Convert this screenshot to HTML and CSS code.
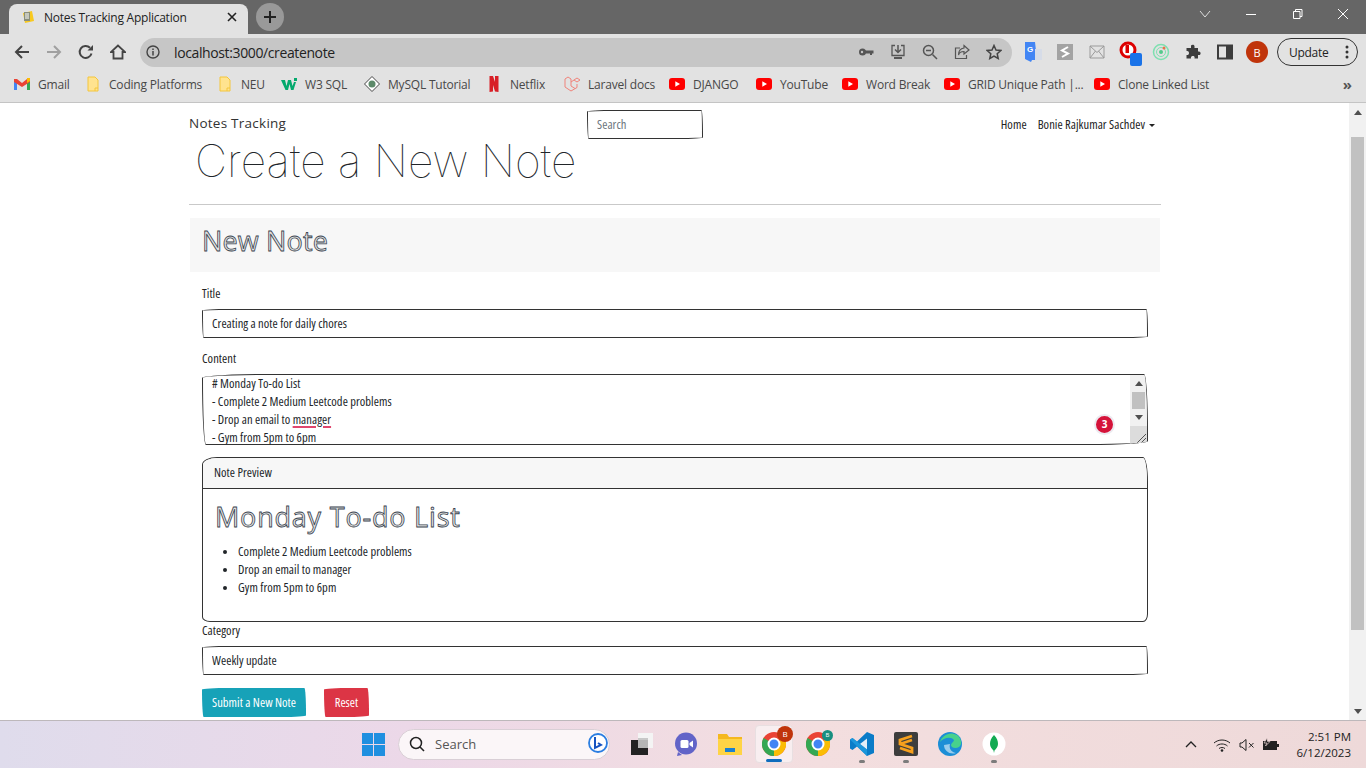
FILE: index.html
```html
<!DOCTYPE html>
<html lang="en">
<head>
<meta charset="utf-8">
<title>Notes Tracking Application</title>
<link rel="stylesheet" href="styles.css">
</head>
<body>
<svg class="defs" width="0" height="0">
  <symbol id="yt" viewBox="0 0 16 16"><rect y="2" width="16" height="12" rx="3" fill="#f00"/><path d="M6.3 5.2 11 8l-4.7 2.8z" fill="#fff"/></symbol>
  <symbol id="folder" viewBox="0 0 16 16"><path d="M3 1h7l3 3v11H3z" fill="#ffe38f" stroke="#f4c63c"/><path d="M10 15v-3h3" fill="none" stroke="#f4c63c"/></symbol>
</svg>
<header class="chrome">
  <div class="tabstrip">
    <div class="tab">
      <svg class="fav" viewBox="0 0 16 16" width="16" height="16"><path d="M3 4l9-2 2 10-9 2z" fill="#f8c91f"/><path d="M4 3h6v9H4z" fill="#8a8f7a"/><path d="M5 5h4M5 7h4M5 9h4" stroke="#fff"/></svg>
      <span class="tabtitle">Notes Tracking Application</span>
      <svg class="tabx" viewBox="0 0 10 10" width="10" height="10"><path d="M1 1l8 8M9 1l-8 8" stroke="#222" stroke-width="1.6"/></svg>
    </div>
    <div class="newtab"><svg viewBox="0 0 14 14" width="14" height="14"><path d="M7 1v12M1 7h12" stroke="#222" stroke-width="2"/></svg></div>
    <div class="winctl">
      <svg viewBox="0 0 46 12" width="46" height="12"><path d="M18 3l5 6 5-6" fill="none" stroke="#ddd"/></svg>
      <svg viewBox="0 0 46 12" width="46" height="12"><path d="M18 6.500h10" stroke="#fff"/></svg>
      <svg viewBox="0 0 46 12" width="46" height="12"><path d="M19.500 3.500h6.500v7h-6.500zM21.500 3.500v-2h6.500v7h-2" fill="none" stroke="#fff"/></svg>
      <svg viewBox="0 0 46 12" width="46" height="12"><path d="M18 1l10 10M28 1 18 11" stroke="#fff"/></svg>
    </div>
  </div>
  <div class="toolbar">
    <div class="navbtn"><svg viewBox="0 0 16 16" width="16" height="16"><path d="M15 8H2M8 2 2 8l6 6" fill="none" stroke="#444" stroke-width="2"/></svg></div>
    <div class="navbtn"><svg viewBox="0 0 16 16" width="16" height="16"><path d="M1 8h13M8 2l6 6-6 6" fill="none" stroke="#a0a0a0" stroke-width="2"/></svg></div>
    <div class="navbtn"><svg viewBox="0 0 16 16" width="16" height="16"><path d="M13.500 9.500A6 6 0 1 1 12 3.700" fill="none" stroke="#444" stroke-width="2"/><path d="M9.500 6.500H15V1z" fill="#444"/></svg></div>
    <div class="navbtn"><svg viewBox="0 0 16 16" width="16" height="16"><path d="M8 1.500 1 8h2.500v6.500h9V8H15z" fill="none" stroke="#444" stroke-width="1.800"/></svg></div>
    <div class="omnibox">
      <svg class="info" viewBox="0 0 14 14" width="14" height="14"><circle cx="7" cy="7" r="6" fill="none" stroke="#444" stroke-width="1.400"/><path d="M7 6v4.500M7 3.500v1.500" stroke="#444" stroke-width="1.500"/></svg>
      <span class="url">localhost:3000/createnote</span>
      <div class="omniicons">
        <div class="navbtn"><svg viewBox="0 0 16 16" width="16" height="16"><circle cx="4.500" cy="8" r="3.500" fill="#555"/><path d="M7 6.500h8.500v3H14v1.500h-2V9.500H7z" fill="#555"/><circle cx="4" cy="8" r="1.200" fill="#c6c6c6"/></svg></div>
        <div class="navbtn"><svg viewBox="0 0 16 16" width="16" height="16"><path d="M5 1.500H2v10h12v-10h-3" fill="none" stroke="#555" stroke-width="1.300"/><path d="M8 1v7M5 5.500 8 8.500l3-3" fill="none" stroke="#555" stroke-width="1.500"/><path d="M4 13h8v2H4z" fill="#555"/></svg></div>
        <div class="navbtn"><svg viewBox="0 0 16 16" width="16" height="16"><circle cx="6.500" cy="6.500" r="5" fill="none" stroke="#555" stroke-width="1.500"/><path d="M10.500 10.500 15 15M4 6.500h5" stroke="#555" stroke-width="1.500"/></svg></div>
        <div class="navbtn"><svg viewBox="0 0 16 16" width="16" height="16"><path d="M6 4H1.500v10.500h11V11" fill="none" stroke="#555" stroke-width="1.200"/><path d="M10 1.500 15 6l-5 4V7.500C7 7.500 5 9 4.500 11c0-4 2-6.500 5.500-7z" fill="none" stroke="#555" stroke-width="1.200"/></svg></div>
        <div class="navbtn"><svg viewBox="0 0 16 16" width="16" height="16"><path d="M8 1.500l2 4.500 4.800.5-3.600 3.200 1 4.800L8 12l-4.200 2.500 1-4.800L1.200 6.500 6 6z" fill="none" stroke="#444" stroke-width="1.500"/></svg></div>
      </div>
    </div>
    <div class="exts">
      <div class="navbtn"><svg viewBox="0 0 18 20" width="18" height="20"><path d="M1 0h10l2 18H8l-1 2-6-3z" fill="#4285f4"/><path d="M11 7h7v11h-7z" fill="#d6dce8"/><text x="3" y="10" class="gt">G</text></svg></div>
      <div class="navbtn"><svg viewBox="0 0 16 16" width="16" height="16"><path d="M0 0h16v16H0z" fill="#a3a3a3"/><path d="M11 3 5 6.500l6 3-6 3.500" fill="none" stroke="#fff" stroke-width="2"/></svg></div>
      <div class="navbtn"><svg viewBox="0 0 16 14" width="16" height="14"><path d="M1 1h14v12H1zM1 1l7 6.500L15 1M1 13l5.500-7M15 13 9.500 6" fill="none" stroke="#9a9a9a"/></svg></div>
      <div class="navbtn"><svg class="ext-block" viewBox="0 0 24 26" width="24" height="26"><circle cx="9" cy="9" r="7" fill="#fff" stroke="#d00" stroke-width="3"/><path d="M6.500 4h3.500v8H6.500z" fill="#d00"/><rect x="11" y="12" width="12" height="13" rx="2" fill="#1a73e8"/></svg></div>
      <div class="navbtn"><svg viewBox="0 0 18 18" width="18" height="18"><circle cx="9" cy="9" r="7.500" fill="none" stroke="#7ee0b0" stroke-width="1.500"/><circle cx="9" cy="9" r="4.500" fill="none" stroke="#7ee0b0"/><circle cx="9" cy="9" r="2" fill="#54c98c"/><circle cx="12" cy="5" r="1.500" fill="#e8734a"/></svg></div>
      <div class="navbtn"><svg viewBox="0 0 16 16" width="16" height="16"><path d="M6 1.500c1-1 3-1 3.500.5V4H13v3.500c2-.5 3 1 2.500 2.500s-2 1-2.500 1v3.500H9.500c.5-2-.5-2.500-1.500-2.500s-2.500.5-2 2.500H1.500V11c2 .5 2.500-1 2.500-2S3.500 6.500 1.500 7V4H6z" fill="#3c3c3c"/></svg></div>
      <div class="navbtn"><svg viewBox="0 0 16 16" width="16" height="16"><path d="M1 1.500h14v13H1z" fill="none" stroke="#3c3c3c" stroke-width="2"/><path d="M9 1.500h6v13H9z" fill="#3c3c3c"/></svg></div>
      <div class="navbtn"><span class="avatar">B</span></div>
    </div>
    <div class="update"><span>Update</span><svg viewBox="0 0 4 14" width="4" height="14"><circle cx="2" cy="2" r="1.500" fill="#333"/><circle cx="2" cy="7" r="1.500" fill="#333"/><circle cx="2" cy="12" r="1.500" fill="#333"/></svg></div>
  </div>
  <nav class="bookmarks">
    <a class="bm"><svg viewBox="0 0 16 12" width="16" height="12"><path d="M0 3v9h3V5z" fill="#4285f4"/><path d="M13 5v7h3V3z" fill="#34a853"/><path d="M0 1v3l8 5 8-5V1l-3 0-5 4-5-4z" fill="#ea4335"/><path d="M13 0h3v3l-3 2z" fill="#fbbc04"/></svg><span>Gmail</span></a>
    <a class="bm"><svg width="16" height="16"><use href="#folder"/></svg><span>Coding Platforms</span></a>
    <a class="bm"><svg width="16" height="16"><use href="#folder"/></svg><span>NEU</span></a>
    <a class="bm"><svg viewBox="0 0 16 12" width="16" height="12"><path d="M0 2h4l1.500 6L7 2h3l1.500 6L13 4h2l-2.500 8h-2.500L8.500 6 7 12H4.500z" fill="#04a96d"/><path d="M13 0h3v3h-3z" fill="#04a96d"/></svg><span>W3 SQL</span></a>
    <a class="bm"><svg viewBox="0 0 16 16" width="16" height="16"><path d="M8 .5 15.500 8 8 15.500.5 8z" fill="#fff" stroke="#444"/><circle cx="8" cy="8" r="3.500" fill="#5d8a6a"/></svg><span>MySQL Tutorial</span></a>
    <a class="bm"><svg viewBox="0 0 16 16" width="16" height="16"><path d="M3.500 0H7l2 6V0h3.500v16C11.500 15.800 10 15.600 9 15.500L7 9v6.500l-3.500.5z" fill="#d81f26"/></svg><span>Netflix</span></a>
    <a class="bm"><svg viewBox="0 0 16 16" width="16" height="16"><path d="M1 3l3-2 3 2v7l4 2.500M1 3v8l6 4 6-3.500V8M7 6l3-2 3 2 3-2-3-2-3 2" fill="none" stroke="#f0837a"/></svg><span>Laravel docs</span></a>
    <a class="bm"><svg width="16" height="16"><use href="#yt"/></svg><span>DJANGO</span></a>
    <a class="bm"><svg width="16" height="16"><use href="#yt"/></svg><span>YouTube</span></a>
    <a class="bm"><svg width="16" height="16"><use href="#yt"/></svg><span>Word Break</span></a>
    <a class="bm"><svg width="16" height="16"><use href="#yt"/></svg><span>GRID Unique Path |...</span></a>
    <a class="bm"><svg width="16" height="16"><use href="#yt"/></svg><span>Clone Linked List</span></a>
    <span class="more">»</span>
  </nav>
</header>

<div class="viewport">
  <main class="page">
    <div class="container">
      <div class="navbar">
        <span class="brand">Notes Tracking</span>
        <input class="search sketch" placeholder="Search">
        <div class="navlinks"><span>Home</span><span class="user">Bonie Rajkumar Sachdev<i class="caret"></i></span></div>
      </div>
      <h1 class="title">Create a New Note</h1>
      <hr class="rule">
      <section class="card">
        <div class="cardhead"><h2 class="sketchy-head">New Note</h2></div>
        <form class="form">
          <label class="lbl">Title</label>
          <input class="field sketch" value="Creating a note for daily chores">
          <label class="lbl lbl-content">Content</label>
          <div class="textarea sketch">
            <div class="lines">
              <div># Monday To-do List</div>
              <div>- Complete 2 Medium Leetcode problems</div>
              <div>- Drop an email to <u>manager</u></div>
              <div>- Gym from <u>5pm</u> to <u>6pm</u></div>
            </div>
            <span class="badge">3</span>
            <div class="sb">
              <svg class="arrow" viewBox="0 0 8 5" width="8" height="5"><path d="M4 0l4 5H0z" fill="#505050"/></svg>
              <div class="sbthumb"></div>
              <svg class="arrow" viewBox="0 0 8 5" width="8" height="5"><path d="M0 0h8L4 5z" fill="#505050"/></svg>
              <div class="resizer"><svg viewBox="0 0 14 14" width="14" height="14"><path d="M4 13 13 4M8 13l5-5" stroke="#555"/></svg></div>
            </div>
          </div>
          <div class="preview">
            <div class="prevhead">Note Preview</div>
            <div class="prevbody">
              <h2 class="sketchy-head big">Monday To-do List</h2>
              <ul class="items">
                <li>Complete 2 Medium Leetcode problems</li>
                <li>Drop an email to manager</li>
                <li>Gym from 5pm to 6pm</li>
              </ul>
            </div>
          </div>
          <label class="lbl lbl-cat">Category</label>
          <input class="field sketch" value="Weekly update">
          <div class="actions">
            <button type="button" class="btn info-btn">Submit a New Note</button>
            <button type="button" class="btn danger-btn">Reset</button>
          </div>
        </form>
      </section>
    </div>
  </main>
  <aside class="scrollbar">
    <svg viewBox="0 0 8 5" width="8" height="5"><path d="M4 0l4 5H0z" fill="#505050"/></svg>
    <div class="thumb"></div>
    <svg viewBox="0 0 8 5" width="8" height="5"><path d="M0 0h8L4 5z" fill="#505050"/></svg>
  </aside>
</div>

<footer class="taskbar">
  <div class="tb-win"><svg viewBox="0 0 23 23" width="23" height="23"><path d="M0 0h11v11H0zM12 0h11v11H12zM0 12h11v11H0zM12 12h11v11H12z" fill="#1f8fe0"/></svg></div>
  <div class="tb-search">
    <svg viewBox="0 0 16 16" width="16" height="16"><circle cx="7" cy="7" r="5.500" fill="none" stroke="#222" stroke-width="1.500"/><path d="M11 11l4 4" stroke="#222" stroke-width="1.600"/></svg>
    <span>Search</span>
    <svg class="bing" viewBox="0 0 22 22" width="22" height="22"><circle cx="11" cy="10" r="9" fill="#fff" stroke="#2a7de1" stroke-width="1.800"/><path d="M8 4v11l6-3-3-2" fill="none" stroke="#1653c0" stroke-width="2"/></svg>
  </div>
  <div class="tb-app"><svg viewBox="0 0 22 22" width="22" height="22"><path d="M7 0h15v15H7z" fill="#f4f4f4"/><path d="M7 5h10v10H7z" fill="#c8c8c8"/><path d="M0 7h17v15H0z" fill="#222"/><path d="M7 7h10v8H7z" fill="#b5b5b5"/></svg></div>
  <div class="tb-app"><svg viewBox="0 0 24 24" width="24" height="24"><circle cx="12" cy="11.500" r="11" fill="#6264c8"/><path d="M4 20l-1 4 5-1z" fill="#6264c8"/><rect x="6.500" y="8" width="8" height="8" rx="1.500" fill="#fff"/><path d="M15.500 11l3.500-2.500v7L15.500 13z" fill="#fff"/></svg></div>
  <div class="tb-app"><svg viewBox="0 0 24 22" width="24" height="22"><path d="M0 1h9l2 3h13v18H0z" fill="#f5b81f"/><path d="M0 6h24v16H0z" fill="#ffd445"/><path d="M7 15h10v4H7z" fill="#1c80d0"/></svg></div>
  <div class="tb-app tb-active">
    <div class="chromeicon"><svg viewBox="0 0 24 24" width="24" height="24"><circle cx="12" cy="12" r="12" fill="#ea4335"/><path d="M12 12 1.600 6A12 12 0 0 0 12 24z" fill="#34a853"/><path d="M12 12V24A12 12 0 0 0 22.400 6z" fill="#fbbc04"/><circle cx="12" cy="12" r="5.500" fill="#4285f4" stroke="#fff" stroke-width="2"/></svg><span class="pbadge">B</span></div>
    <i class="runbar"></i>
  </div>
  <div class="tb-app">
    <div class="chromeicon"><svg viewBox="0 0 24 24" width="24" height="24"><circle cx="12" cy="12" r="12" fill="#ea4335"/><path d="M12 12 1.600 6A12 12 0 0 0 12 24z" fill="#34a853"/><path d="M12 12V24A12 12 0 0 0 22.400 6z" fill="#fbbc04"/><circle cx="12" cy="12" r="5.500" fill="#4285f4" stroke="#fff" stroke-width="2"/></svg><span class="pbadge teal">B</span></div>
  </div>
  <div class="tb-app tb-run"><svg viewBox="0 0 24 24" width="24" height="24"><path d="M17 0l7 3v18l-7 3-10-9.500L2.500 18 0 16.500V7.500L2.500 6 7 9.500z" fill="#0a7cc8"/><path d="M17 6.500 10 12l7 5.500z" fill="#e2eef7"/><path d="M0 7.500 2.500 6 17 17.500V24z" fill="#1f9ce0" opacity=".8"/></svg></div>
  <div class="tb-app tb-run"><svg viewBox="0 0 24 24" width="24" height="24"><rect width="24" height="24" rx="2" fill="#3d3d3d"/><path d="M18 4 6 8v4l12 4v4L6 16M6 12l12-4" fill="none" stroke="#f7a01d" stroke-width="2.800"/></svg></div>
  <div class="tb-app"><svg viewBox="0 0 24 24" width="24" height="24"><circle cx="12" cy="12" r="12" fill="#1c8ed6"/><path d="M2 10C4 3 12-1 19 3c4 3 6 9 2 12-3 2-8 1-8-2 0-2 3-3 3-5-3-4-11-2-14 2z" fill="#47d18c"/><path d="M6 13c0 6 6 10 12 8-6-1-7-6-6-9z" fill="#fff" opacity=".55"/></svg></div>
  <div class="tb-app tb-run"><svg viewBox="0 0 24 24" width="24" height="24"><circle cx="12" cy="12" r="11.500" fill="#fff"/><path d="M12 3c3 3 4 6 4 9s-2 5-3.500 6.500L12 21l-.5-2.500C10 17 8 15 8 12s1-6 4-9z" fill="#13aa52"/></svg></div>
  <div class="tray">
    <svg viewBox="0 0 12 7" width="12" height="7"><path d="M1 6l5-5 5 5" fill="none" stroke="#222" stroke-width="1.300"/></svg>
    <svg class="wifi" viewBox="0 0 18 14" width="18" height="14"><path d="M1 5c4.500-4 11.500-4 16 0M3.500 8c3-2.700 8-2.700 11 0M6 10.500c1.700-1.300 4.300-1.300 6 0" fill="none" stroke="#222"/><circle cx="9" cy="12.500" r="1.300" fill="#222"/></svg>
    <svg class="spk" viewBox="0 0 16 14" width="16" height="14"><path d="M1 5h2l4-3.500v11L3 9H1z" fill="none" stroke="#222"/><path d="M10 5l4.500 4.500M14.500 5 10 9.500" stroke="#222"/></svg>
    <svg class="batt" viewBox="0 0 18 14" width="18" height="14"><path d="M1 3h14v9H1z" fill="#222"/><path d="M15 6h2v3h-2z" fill="#222"/><path d="M5 0 2 5h3L3.500 8 8 3.500H5.500z" fill="#222" stroke="#f0dada" stroke-width=".7"/></svg>
    <div class="clock"><div>2:51 PM</div><div>6/12/2023</div></div>
  </div>
</footer>
</body>
</html>
```
FILE: styles.css
```css
* { box-sizing: border-box; }
html, body { margin: 0; height: 100%; overflow: hidden; }
body { display: flex; flex-direction: column; height: 768px; width: 1366px; font-family: "Open Sans", "Lato", sans-serif; font-stretch: 75%; font-size: 12.500px; letter-spacing: .05px; color: #212529; background: #fff; }
.defs { position: absolute; }

/* browser chrome */
.chrome { height: 103px; flex: none; background: #e2e2e2; font-family: "Open Sans", "Noto Sans", sans-serif; font-size: 12px; font-stretch: 100%; letter-spacing: 0; border-bottom: 1px solid #c4c4c4; }
.tabstrip { height: 34px; background: #666; display: flex; align-items: flex-end; padding-left: 9px; }
.tab { width: 239px; height: 30px; background: #e2e2e2; border-radius: 8px 8px 0 0; display: flex; align-items: center; padding: 0 11px 4px; }
.tabtitle { font-size: 12px; color: #222; margin-left: 8px; flex: 1; letter-spacing: -.25px; }
.newtab { width: 28px; height: 28px; border-radius: 50%; background: #999; margin: 0 0 3px 8px; display: flex; align-items: center; justify-content: center; }
.winctl { margin-left: auto; display: flex; align-items: center; align-self: flex-start; height: 28px; }
.toolbar { height: 34px; display: flex; align-items: center; padding: 2px 8px 0 6px; }
.navbtn { width: 32px; height: 30px; display: flex; align-items: center; justify-content: center; flex: none; }
.omnibox { margin-left: 6px; width: 872px; height: 29px; border-radius: 15px; background: #c6c6c6; display: flex; align-items: center; padding: 0 2px 0 6px; }
.url { font-size: 14px; color: #222; margin-left: 14px; letter-spacing: -.38px; }
.omniicons { margin-left: auto; display: flex; }
.exts { display: flex; margin-left: 5px; }
.ext-block { margin-top: 4px; margin-left: 4px; }
.gt { font: bold 8px "Liberation Sans", sans-serif; fill: #fff; }
.avatar { width: 22px; height: 22px; border-radius: 50%; background: #c0340b; color: #fff; font-size: 11px; display: flex; align-items: center; justify-content: center; }
.update { margin-left: 4px; width: 81px; height: 28px; border: 1px solid #333; border-radius: 14px; display: flex; align-items: center; justify-content: space-between; padding: 0 8px 0 11px; font-size: 12px; letter-spacing: -.3px; color: #222; }
.bookmarks { height: 34px; display: grid; grid-template-columns: 71px 132px 64px 83px 122px 78px 105px 87px 86px 102px 150px 200px 1fr; align-items: center; padding: 0 14px 2px 14px; font-size: 12px; color: #484848; }
.bm { display: flex; align-items: center; gap: 8px; white-space: nowrap; letter-spacing: -.2px; }
.more { justify-self: end; font-size: 15px; line-height: 15px; font-weight: 700; color: #555; }

/* page */
.viewport { flex: 1; min-height: 0; display: flex; overflow: hidden; }
.page { flex: 1; min-width: 0; overflow: hidden; }
.container { width: 972px; margin-left: 189px; }
.navbar { height: 36px; display: flex; align-items: center; padding-top: 6px; }
.brand { font: 400 13.500px "Open Sans", sans-serif; letter-spacing: .25px; color: #333; width: 398px; margin-top: -2px; }
.search { width: 116px; height: 29px; padding: 0 9px; }
.search::placeholder { color: #6c757d; opacity: 1; }
.navlinks { margin-left: auto; margin-right: 6px; display: flex; gap: 11px; color: #222; }
.caret { display: inline-block; margin-left: 4px; vertical-align: 2px; border-top: 3px solid #222; border-left: 3px solid transparent; border-right: 3px solid transparent; }
.title { margin: 0 0 0 6px; font: 100 44.300px/44px "Inter", "Lato", sans-serif; color: #212529; letter-spacing: 0; }
.rule { margin: 21px 0 13px; border: 0; border-top: 1px solid #c9c9c9; height: 0; }
.card { margin-left: 1px; width: 970px; }
.cardhead { height: 54px; background: #f7f7f7; padding: 0 0 10px 12px; display: flex; align-items: center; }
.sketchy-head { margin: 0; font: 400 27px "Open Sans", sans-serif; letter-spacing: .15px; color: #e4e4e4; -webkit-text-stroke: .8px #3a4450; }
.form { padding: 14px 12px 0; display: flex; flex-direction: column; align-items: flex-start; }
.lbl { line-height: 16px; color: #222; margin-bottom: 7px; }
.lbl-content { margin-top: 13px; }
.lbl-cat { margin-top: 1px; }
.sketch { border: 1px solid #333; border-radius: 255px 15px 225px 15px / 15px 225px 15px 255px; background: #fff; outline: none; color: #212529; font: inherit; letter-spacing: inherit; }
.field { width: 946px; height: 29px; padding: 0 9px; flex: none; }
.textarea { position: relative; width: 946px; height: 71px; display: flex; overflow: hidden; }
.lines { flex: 1; padding: 0 9px; line-height: 18px; }
.lines u { text-decoration: underline solid #e0476e 1.500px; text-underline-offset: 2px; }
.badge { position: absolute; right: 32px; top: 39px; width: 21px; height: 21px; border-radius: 50%; background: #d5133a; border: 2px solid #eceaf0; color: #fff; font: 700 10px/17px "Open Sans", sans-serif; letter-spacing: 0; text-align: center; }
.sb { width: 17px; background: #f1f1f1; display: flex; flex-direction: column; align-items: center; flex: none; padding-top: 6px; }
.arrow { flex: none; }
.sbthumb { width: 13px; height: 17px; background: #c1c1c1; margin: 6px 0; flex: none; }
.resizer { margin-top: auto; width: 17px; height: 18px; background: #dcdcdc; display: flex; align-items: flex-end; justify-content: flex-end; }
.preview { width: 946px; height: 165px; margin-top: 12px; border: 1px solid #333; border-radius: 15px 5px 5px 8px / 8px 25px 8px 5px; overflow: hidden; flex: none; }
.prevhead { height: 31px; background: #f7f7f7; border-bottom: 1px solid #333; padding-left: 11px; line-height: 30px; }
.prevbody { padding: 9px 12px; }
.big { letter-spacing: .8px; line-height: 38px; }
.items { margin: 7px 0 0; padding-left: 23px; line-height: 18px; }
.actions { margin-top: 13px; display: flex; gap: 18px; }
.btn { height: 29px; border: 0; color: #fff; font: inherit; letter-spacing: inherit; white-space: nowrap; border-radius: 255px 15px 225px 15px / 15px 225px 15px 255px; padding: 0; }
.info-btn { width: 104px; background: #17a2b8; }
.danger-btn { width: 45px; background: #dc3545; }

.scrollbar { width: 17px; flex: none; background: #f1f1f1; display: flex; flex-direction: column; align-items: center; padding: 7px 0 6px; }
.thumb { width: 13px; height: 493px; background: #c1c1c1; margin-top: 22px; }
.scrollbar svg:last-child { margin-top: auto; }

/* taskbar */
.taskbar { height: 48px; flex: none; display: flex; align-items: center; padding: 0 0 1px 351px; background: linear-gradient(90deg, #dfdcec 0%, #ecd8e8 30%, #f3dedf 60%, #eed9d9 100%); border-top: 1px solid #bdb8bb; font-family: "Open Sans", sans-serif; font-stretch: 100%; letter-spacing: 0; position: relative; }
.tb-win { width: 44px; display: flex; justify-content: center; }
.tb-search { margin-left: 3px; margin-right: 10px; width: 212px; height: 31px; border-radius: 16px; background: #fbf6f8; border: 1px solid #d9cfd6; display: flex; align-items: center; padding: 0 0 0 10px; gap: 10px; font-size: 13px; color: #555; }
.bing { margin-left: auto; }
.tb-app { width: 44px; height: 38px; display: flex; align-items: center; justify-content: center; position: relative; flex: none; }
.tb-active::before { content: ""; position: absolute; left: 3px; right: 3px; top: 0; bottom: 0; background: #f8eef0; border: 1px solid #e8dfe1; border-radius: 4px; }
.tb-active > * { position: relative; }
.tb-active > .runbar { position: absolute; bottom: 1px; left: 50%; margin-left: -8px; width: 16px; height: 3px; border-radius: 2px; background: #0f6cbd; }
.tb-run::after { content: ""; position: absolute; bottom: 0; left: 50%; margin-left: -3px; width: 6px; height: 3px; border-radius: 2px; background: #7c7c7c; }
.chromeicon { position: relative; width: 24px; height: 24px; }
.pbadge { position: absolute; right: -7px; top: -6px; width: 16px; height: 16px; border-radius: 50%; background: #c0340b; color: #fff; font: 8px/16px "Open Sans", sans-serif; text-align: center; }
.pbadge.teal { background: #178f80; width: 11px; height: 11px; line-height: 11px; right: -3px; top: -2px; font-size: 6px; }
.tray { position: absolute; left: 1185px; right: 15px; top: 0; bottom: 0; display: flex; align-items: center; color: #222; }
.wifi { margin-left: 16px; }
.spk { margin-left: 8px; }
.batt { margin-left: 7px; }
.clock { margin-left: auto; font-size: 11.500px; line-height: 16px; text-align: right; }
```
